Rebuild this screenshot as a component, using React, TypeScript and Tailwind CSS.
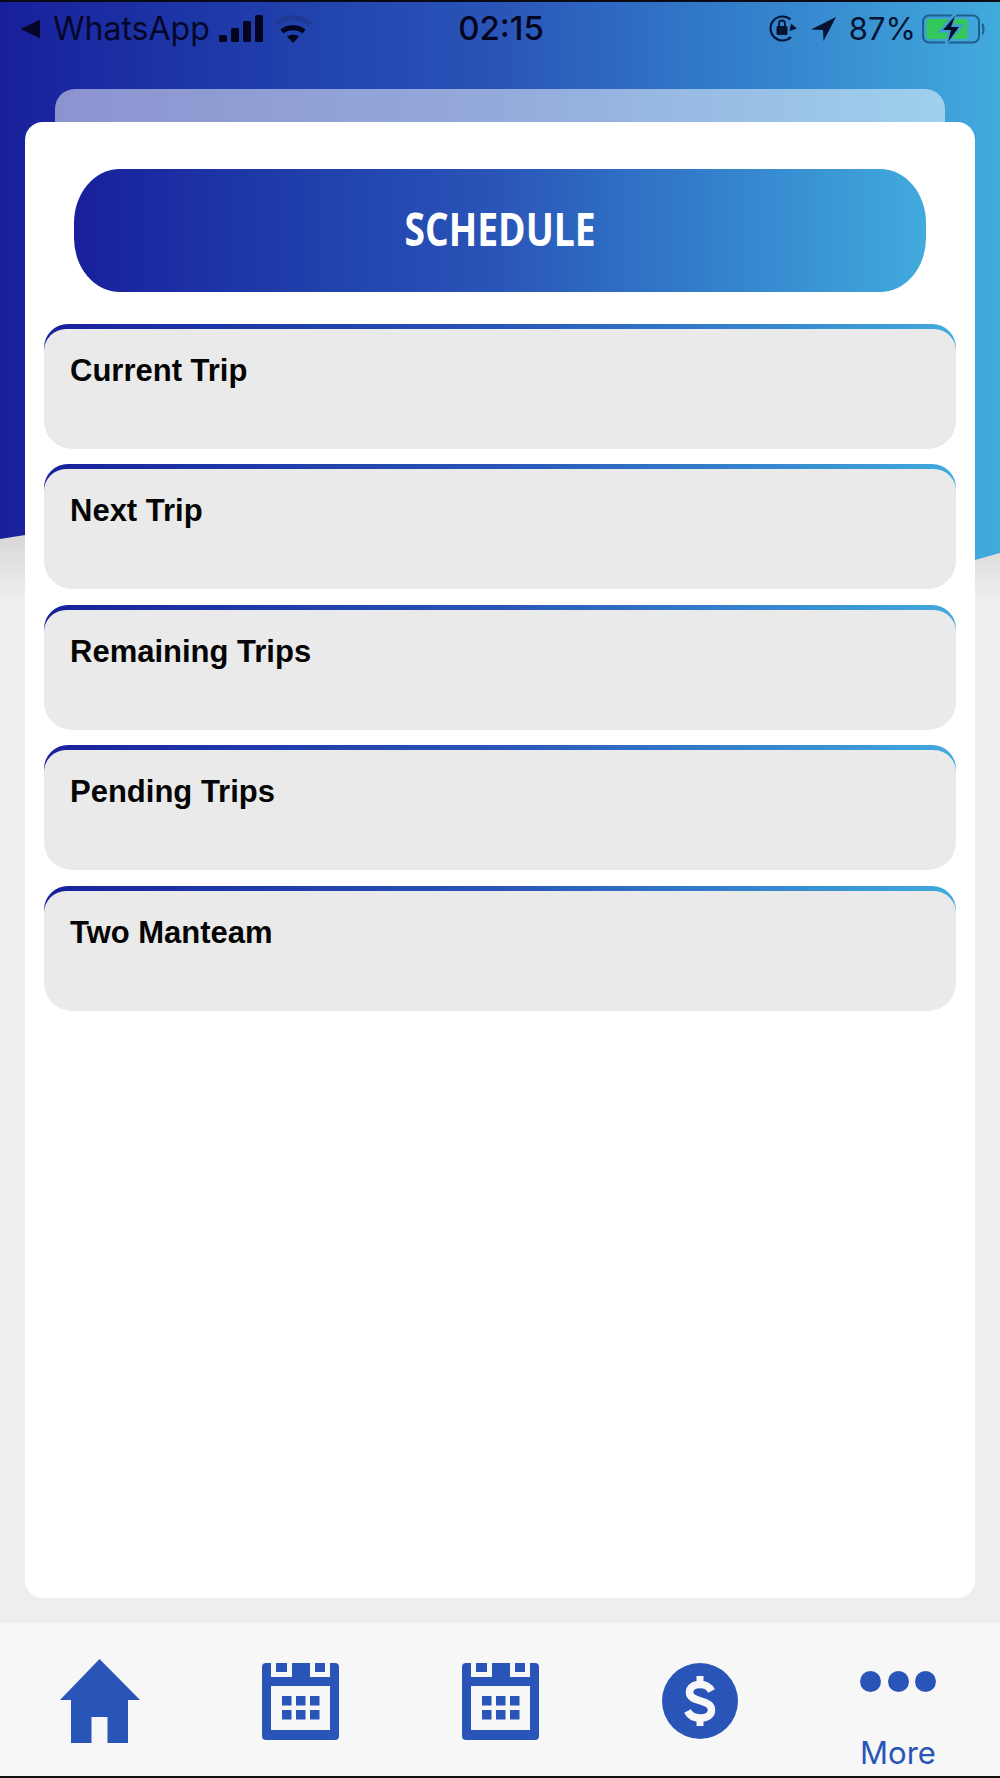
const TRIPS = ["Current Trip", "Next Trip", "Remaining Trips", "Pending Trips", "Two Manteam"];

function BackArrow() {
  return (
    <svg width="20" height="20" viewBox="0 0 20 20" className="mr-[13px]">
      <path d="M20 0.5V19.5L0.5 10Z" fill="#05072a" />
    </svg>
  );
}

function Signal() {
  return (
    <svg width="44" height="27" viewBox="0 0 44 27" className="ml-[9px]">
      <rect x="0" y="20" width="8" height="7" rx="1.5" fill="#03051f" />
      <rect x="12" y="13" width="8" height="14" rx="1.5" fill="#03051f" />
      <rect x="24" y="6" width="8" height="21" rx="1.5" fill="#03051f" />
      <rect x="36" y="0" width="8" height="27" rx="1.5" fill="#03051f" />
    </svg>
  );
}

function Wifi() {
  return (
    <svg width="38" height="28" viewBox="0 0 38 28" className="ml-[11px]">
      <path d="M1.500 9C11.500 0.500 26.500 0.500 36.500 9" fill="none" stroke="#1f3a94" strokeWidth="5" />
      <path d="M8 16.500C14 11.500 24 11.500 30 16.500" fill="none" stroke="#03051f" strokeWidth="5" />
      <path d="M13 21.500C16.500 19 21.500 19 25 21.500L19 28Z" fill="#03051f" />
    </svg>
  );
}

function RotationLock() {
  return (
    <svg width="29" height="29" viewBox="0 0 29 29">
      <path d="M22.500 5.500A12 12 0 1 0 23 23" fill="none" stroke="#061433" strokeWidth="2.2" />
      <path d="M23 9.500L29 14.500L21.500 17Z" fill="#061433" />
      <rect x="8.500" y="12" width="11" height="9" rx="1.500" fill="#061433" />
      <path d="M11 12V9.500A3 3 0 0 1 17 9.500V12" fill="none" stroke="#061433" strokeWidth="1.800" />
    </svg>
  );
}

function LocationArrow() {
  return (
    <svg width="25" height="24" viewBox="0 0 25 24" className="ml-[14px]">
      <path d="M25 0L0 12.500L12 13L12.500 24Z" fill="#061433" />
    </svg>
  );
}

function Battery() {
  return (
    <svg width="63" height="30" viewBox="0 0 63 30">
      <rect x="1" y="1.500" width="56" height="27" rx="6" fill="none" stroke="#1f5f8d" strokeWidth="2" />
      <rect x="4.500" y="5" width="41" height="20" rx="2" fill="#34c759" />
      <path d="M60 10C62 11 62 19 60 20" fill="none" stroke="#1f5f8d" strokeWidth="2" />
      <path d="M33 0L19 17H28L24 30L39 12H30Z" fill="#34c759" stroke="#3f9ed8" strokeWidth="3" />
      <path d="M33 2L21 16H29L26 28L37 13H29Z" fill="#03101f" />
    </svg>
  );
}

function HomeIcon() {
  return (
    <svg width="80" height="85" viewBox="0 0 80 85">
      <path d="M39.500 0L80 41H68V84H47.500V58H31.500V84H11V41H0Z" fill="#2a55b8" />
    </svg>
  );
}

function CalendarIcon() {
  return (
    <svg width="77" height="77" viewBox="0 0 77 77">
      <path d="M4 0H9V14H30V0H48V14H68V0H73A4 4 0 0 1 77 4V73A4 4 0 0 1 73 77H4A4 4 0 0 1 0 73V4A4 4 0 0 1 4 0Z" fill="#2a55b8" />
      <rect x="14" y="0" width="11" height="9" fill="#2a55b8" />
      <rect x="53" y="0" width="10" height="9" fill="#2a55b8" />
      <rect x="9" y="23" width="59" height="44" fill="#f7f7f7" />
      {[20, 34, 48].map((x) =>
        [33, 47].map((y) => <rect key={`${x}-${y}`} x={x} y={y} width="9.500" height="9.500" fill="#2a55b8" />),
      )}
    </svg>
  );
}

function DollarIcon() {
  return (
    <svg width="76" height="76" viewBox="0 0 76 76">
      <circle cx="38" cy="38" r="38" fill="#2a55b8" />
      <path d="M38 13V21M38 55V63" stroke="#f7f7f7" strokeWidth="7" />
      <path d="M49.500 28C47 23 43 21.500 38 21.500C31.500 21.500 27.500 24.500 27.500 29.500C27.500 40 49.500 35.500 49.500 47C49.500 52.500 45 55 38 55C32.500 55 28 53 25.500 48" fill="none" stroke="#f7f7f7" strokeWidth="7.500" />
    </svg>
  );
}

function TripRow({ title }: { title: string }) {
  return (
    <div className="h-[125px] rounded-t-[24px] rounded-b-[28px] bg-gradient-to-r from-[#191f9c] via-[#2a55b8] to-[#42aadd] bg-no-repeat bg-[size:100%_40px]">
      <div className="h-[120px] translate-y-[5px] rounded-t-[22px] rounded-b-[28px] bg-[#eaeaea] px-[26px] pt-[22px]">
        <span className="text-[31px] leading-[40px] font-bold text-[#050505]">{title}</span>
      </div>
    </div>
  );
}

export default function App() {
  return (
    <div className="relative flex h-[1778px] w-[1000px] flex-col overflow-hidden bg-[#eeeeee] font-['Liberation_Sans',sans-serif]">
      {/* 顶部渐变背景 */}
      <div className="absolute left-0 top-[530px] h-[70px] w-full bg-gradient-to-b from-[#d6d6d6] to-[#eeeeee]" />
      <div className="absolute left-0 top-0 h-[565px] w-full bg-gradient-to-r from-[#191f9c] via-[#2a55b8] to-[#42aadd] [clip-path:polygon(0_0,100%_0,100%_553px,975px_560px,25px_535px,0_539px)]" />

      {/* status bar */}
      <div className="relative h-[89px] border-t-2 border-[#0a0a14] pt-[10px]">
        <div className="grid h-[30px] grid-cols-[1fr_auto_1fr] items-center pl-[20px] pr-[15px]">
          <div className="flex items-center">
            <BackArrow />
            <span className="font-['Inter',sans-serif] text-[32px] leading-none text-[#05072a]">WhatsApp</span>
            <Signal />
            <Wifi />
          </div>
          <span className="pr-[3px] font-['Inter',sans-serif] text-[33px] leading-none font-[550] text-[#03051f]">02:15</span>
          <div className="flex items-center justify-end">
            <RotationLock />
            <LocationArrow />
            <span className="ml-[13px] mr-[6px] font-['Inter',sans-serif] text-[31px] leading-none text-[#061433]">87%</span>
            <Battery />
          </div>
        </div>
      </div>

      {/* 卡片 */}
      <div className="relative mx-[55px] h-[33px] rounded-t-[20px] bg-white/50" />
      <div className="relative mx-[25px] h-[1476px] rounded-[18px] bg-white px-[19px] pt-[47px]">
        <div className="mx-[30px] flex h-[123px] items-center justify-center rounded-[46px/54px] bg-gradient-to-r from-[#191f9c] via-[#2a55b8] to-[#42aadd] pb-[6px]">
          <span className="inline-block scale-x-[0.81] font-['Open_Sans',sans-serif] text-[46px] leading-none font-bold text-white">SCHEDULE</span>
        </div>
        <div className="mt-[32px] flex flex-col gap-[15.4px]">
          {TRIPS.map((trip) => (
            <TripRow key={trip} title={trip} />
          ))}
        </div>
      </div>

      {/* tab bar */}
      <div className="relative mt-[25px] grid h-[153px] grid-cols-5 bg-[#f7f7f7]">
        <div className="flex justify-center pt-[36px]"><HomeIcon /></div>
        <div className="flex justify-center pt-[40px]"><CalendarIcon /></div>
        <div className="flex justify-center pt-[40px]"><CalendarIcon /></div>
        <div className="flex justify-center pt-[40px]"><DollarIcon /></div>
        <div className="flex flex-col items-center pt-[48px] pr-[4px]">
          <div className="flex gap-[6.500px]">
            <span className="h-[21px] w-[21px] rounded-full bg-[#2a55b8]" />
            <span className="h-[21px] w-[21px] rounded-full bg-[#2a55b8]" />
            <span className="h-[21px] w-[21px] rounded-full bg-[#2a55b8]" />
          </div>
          <span className="mt-[45px] font-['Inter',sans-serif] text-[31px] leading-none text-[#2a55b8]">More</span>
        </div>
      </div>
      <div className="h-[2px] bg-[#111111]" />
    </div>
  );
}
